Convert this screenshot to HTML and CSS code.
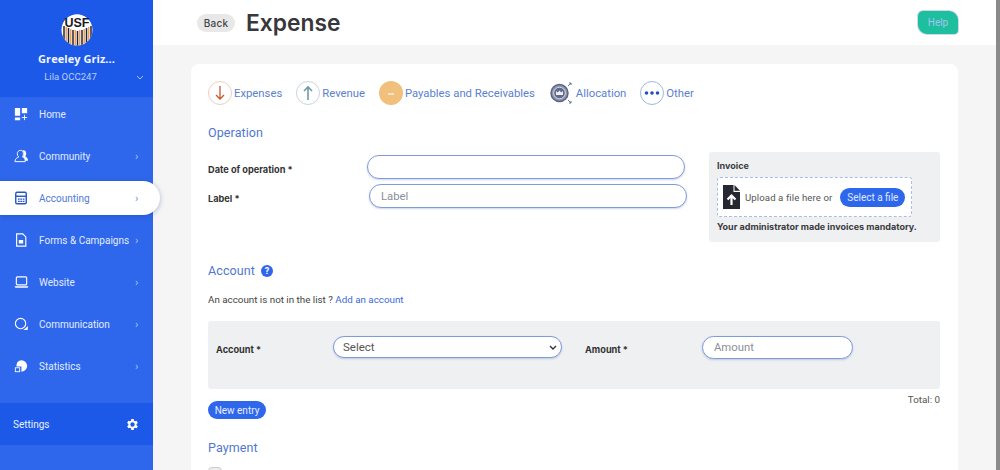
FILE: index.html
```html
<!DOCTYPE html>
<html lang="en">
<head>
<meta charset="utf-8">
<title>Expense</title>
<link rel="stylesheet" href="styles.css">
</head>
<body>
<div class="app">
  <aside class="sidebar">
    <div class="profile">
      <svg class="logo" width="34" height="36" viewBox="0 0 34 36">
        <defs><clipPath id="lc"><circle cx="17" cy="18" r="15.500"/></clipPath></defs>
        <circle cx="17" cy="18" r="15.500" fill="#fff"/>
        <g clip-path="url(#lc)">
          <path d="M4 14v22M8.500 16v20M13 18v18M17.500 19v17M22 18v18M26.500 16v20M31 14v22" stroke="#2b2230" stroke-width="1.500"/>
          <path d="M6.200 15v21M10.700 17v19M15.200 18v18M19.700 18v18M24.200 17v19M28.700 15v21" stroke="#e8a25a" stroke-width="1.500"/>
          <path d="M1 10l16 9 16-9V0H1z" fill="#fff"/>
        </g>
        <text x="17" y="15" text-anchor="middle" class="logo-text">USF</text>
      </svg>
      <div class="org">Greeley Griz...</div>
      <div class="user"><span class="user-name">Lila OCC247</span>
        <svg class="user-caret" width="8" height="5" viewBox="0 0 8 5"><path d="M1 1l3 3 3-3" fill="none" stroke="#a9c2f8" stroke-width="1"/></svg>
      </div>
    </div>
    <nav class="nav">
      <a class="nav-item">
        <svg class="nav-icon" viewBox="0 0 16 16"><path d="M1 1h6v9H1zM9 1h6v6H9zM1 12h6v3H1z" fill="#fff"/><path d="M9 12h6M12 9v6" stroke="#fff" stroke-width="1"/></svg>
        <span class="nav-label">Home</span>
      </a>
      <a class="nav-item">
        <svg class="nav-icon nav-icon-wide" viewBox="0 0 16 14"><path d="M1 13c0-3 2-4 4-5-1-1-1.500-2-1.500-3.500C3.500 2.500 5 1 7 1s3 1.500 3 3.500S9.500 7 9 8c2 1 3 2 3 5z" fill="none" stroke="#fff" stroke-width="1"/><path d="M9 1.200c2-.8 4 .5 4 3 0 1.500-.5 2.500-1 3.300 1.500.7 3 2 3 4.500h-3c0-2-1-3.500-2.500-4.200.5-1 1-2 1-3.300 0-1-.5-2-1.500-3.300z" fill="#fff"/></svg>
        <span class="nav-label">Community</span>
        <span class="chev">›</span>
      </a>
      <a class="nav-item active">
        <svg class="nav-icon" viewBox="0 0 16 16"><rect x="2" y="1.500" width="12" height="13" rx="1.500" fill="none" stroke="#2456c8" stroke-width="1.600"/><path d="M2 6h12" stroke="#2456c8" stroke-width="1.600"/><path d="M4.500 8.500h2v1.500h-2zM7.200 8.500h2v1.500h-2zM10 8.500h2v1.500h-2zM4.500 11h2v1.500h-2zM7.200 11h2v1.500h-2zM10 11h2v1.500h-2z" fill="#2456c8"/></svg>
        <span class="nav-label">Accounting</span>
        <span class="chev">›</span>
      </a>
      <a class="nav-item">
        <svg class="nav-icon" viewBox="0 0 16 16"><path d="M3 1h7l3.500 3.500V15H3z" fill="none" stroke="#fff" stroke-width="1.300"/><path d="M5.500 8h5v4h-5z" fill="#fff"/></svg>
        <span class="nav-label">Forms &amp; Campaigns</span>
        <span class="chev">›</span>
      </a>
      <a class="nav-item">
        <svg class="nav-icon nav-icon-wide" viewBox="0 0 16 14"><rect x="2.500" y="1.500" width="11" height="8.500" rx="1" fill="none" stroke="#fff" stroke-width="1.200"/><path d="M.5 11.500h15l-1 1.500h-13z" fill="#fff"/></svg>
        <span class="nav-label">Website</span>
        <span class="chev">›</span>
      </a>
      <a class="nav-item">
        <svg class="nav-icon nav-icon-wide" viewBox="0 0 16 14"><circle cx="7" cy="6.500" r="5.500" fill="none" stroke="#fff" stroke-width="1.200"/><path d="M15 9l-.500 4.500H10z" fill="#fff"/></svg>
        <span class="nav-label">Communication</span>
        <span class="chev">›</span>
      </a>
      <a class="nav-item">
        <svg class="nav-icon" viewBox="0 0 16 16"><path d="M6 2a6.500 6.500 0 1 1 2.500 12.500V8.500H3A6 6 0 0 1 6 2z" fill="#fff"/><rect x="1.500" y="10" width="5" height="4.500" fill="none" stroke="#fff"/></svg>
        <span class="nav-label">Statistics</span>
        <span class="chev">›</span>
      </a>
    </nav>
    <div class="settings">
      <span>Settings</span>
      <svg width="15" height="15" viewBox="0 0 24 24"><path fill="#fff" d="M19.400 13a7.500 7.500 0 0 0 0-2l2.100-1.600-2-3.500-2.500 1a7.500 7.500 0 0 0-1.700-1L15 3.200h-4l-.4 2.700a7.500 7.500 0 0 0-1.700 1l-2.500-1-2 3.500L6.500 11a7.500 7.500 0 0 0 0 2l-2.100 1.600 2 3.500 2.500-1a7.500 7.500 0 0 0 1.700 1l.4 2.700h4l.4-2.700a7.500 7.500 0 0 0 1.700-1l2.500 1 2-3.500zM13 15.500a3.500 3.500 0 1 1 0-7 3.500 3.500 0 0 1 0 7z" transform="translate(-1)"/></svg>
    </div>
  </aside>

  <main class="main">
    <header class="topbar">
      <div class="title-group">
        <button class="back">Back</button>
        <h1 class="title">Expense</h1>
      </div>
      <button class="help">Help</button>
    </header>

    <div class="content">
      <section class="card">
        <div class="tabs">
          <div class="tab">
            <span class="tab-icon ring-orange"><svg width="14" height="16" viewBox="0 0 14 16"><path d="M7 1v13M3 10l4 4 4-4" fill="none" stroke="#c8562a" stroke-width="1.300"/></svg></span>
            <span>Expenses</span>
          </div>
          <div class="tab">
            <span class="tab-icon ring-gray"><svg width="14" height="16" viewBox="0 0 14 16"><path d="M7 15V2M3 6l4-4 4 4" fill="none" stroke="#6f9aa8" stroke-width="1.600"/></svg></span>
            <span>Revenue</span>
          </div>
          <div class="tab">
            <span class="tab-icon solid-orange"><svg width="6" height="3" viewBox="0 0 6 3"><path d="M0 2h6" stroke="#fff" stroke-width="1.200"/></svg></span>
            <span>Payables and Receivables</span>
          </div>
          <div class="tab tab-allocation">
            <svg class="alloc" width="24" height="24" viewBox="0 0 24 24">
              <circle cx="10.500" cy="12" r="8.500" fill="#8e95a8" stroke="#5b6584" stroke-width="1.500"/>
              <circle cx="10.500" cy="12" r="5.800" fill="#5f6a8c" stroke="#d7dbe6"/>
              <path d="M7 14v-4l1.800 1.500 1.700-2 1.700 2L14 10v4z" fill="#eef0f6"/>
              <path d="M19 5l3-3M20 2h2v2M19 19l3 3M20 22h2v-2" fill="none" stroke="#6b7590" stroke-width="1"/>
            </svg>
            <span>Allocation</span>
          </div>
          <div class="tab">
            <span class="tab-icon ring-blue"><svg width="16" height="4" viewBox="0 0 16 4"><circle cx="2.500" cy="2" r="1.800" fill="#1f4fc4"/><circle cx="8" cy="2" r="1.800" fill="#1f4fc4"/><circle cx="13.500" cy="2" r="1.800" fill="#1f4fc4"/></svg></span>
            <span>Other</span>
          </div>
        </div>

        <h2 class="section-title">Operation</h2>
        <div class="operation">
          <div class="op-fields">
            <div class="op-row">
              <label class="label op-label">Date of operation *</label>
              <input class="field op-date" type="text">
            </div>
            <div class="op-row op-row-second">
              <label class="label op-label">Label *</label>
              <input class="field op-text" type="text" placeholder="Label">
            </div>
          </div>
          <div class="invoice">
            <div class="invoice-title">Invoice</div>
            <div class="dropzone">
              <svg width="18" height="24" viewBox="0 0 18 24"><path d="M1 0h10.500v7H18v17H1z" fill="#26282f"/><path d="M12.500 0L18 5.800h-5.500z" fill="#26282f"/><path d="M9.500 20v-9M5.500 14.500l4-4 4 4" fill="none" stroke="#fff" stroke-width="2.200"/></svg>
              <span class="drop-text">Upload a file here or</span>
              <button class="select-file">Select a file</button>
            </div>
            <div class="invoice-note">Your administrator made invoices mandatory.</div>
          </div>
        </div>

        <h2 class="section-title account-title">Account
          <svg class="q" width="12" height="12" viewBox="0 0 12 12"><circle cx="6" cy="6" r="6" fill="#2f67ec"/><text x="6" y="9.200" text-anchor="middle" class="q-text">?</text></svg>
        </h2>
        <p class="hint">An account is not in the list ? <a class="link">Add an account</a></p>

        <div class="entry">
          <label class="label entry-account">Account *</label>
          <div class="fake-select">
            <span>Select</span>
            <svg width="8" height="5" viewBox="0 0 8 5"><path d="M1 1l3 3 3-3" fill="none" stroke="#333" stroke-width="1.400"/></svg>
          </div>
          <label class="label entry-amount">Amount *</label>
          <input class="field amount" type="text" placeholder="Amount">
        </div>

        <div class="entry-foot">
          <button class="new-entry">New entry</button>
          <span class="total">Total: 0</span>
        </div>

        <h2 class="section-title payment">Payment</h2>
        <span class="check"></span>
      </section>
    </div>
  </main>
  <div class="scrollbar"></div>
</div>
</body>
</html>
```

FILE: styles.css
```css
* { box-sizing: border-box; }
html, body { margin: 0; height: 100%; overflow: hidden; }
body { font-family: Roboto, "Liberation Sans", sans-serif; color: #333; background: #f5f5f5; }
button { font-family: inherit; border: 0; padding: 0; }
h1, h2, p { margin: 0; }

.app { display: flex; width: 1000px; height: 470px; overflow: hidden; }

/* Sidebar */
.sidebar { width: 153px; flex: none; background: #2f67ec; display: flex; flex-direction: column; position: relative; z-index: 2; }
.profile { height: 97px; background: #1c59e8; display: flex; flex-direction: column; align-items: center; padding-top: 12px; position: relative; }
.logo { display: block; }
.logo-text { font: 700 12.500px "Liberation Sans", sans-serif; fill: #1d1a24; }
.org { font: 700 11px/14px "Open Sans", sans-serif; color: #f1f5ff; margin-top: 4px; letter-spacing: .05px; }
.user { font: 400 9.600px/14px Roboto, sans-serif; color: #b8cdfa; margin-top: 4px; }
.user-name { display: block; margin-right: 12px; }
.user-caret { position: absolute; right: 9px; top: 75px; }

.nav { display: flex; flex-direction: column; gap: 8px; }
.nav-item { height: 34px; display: flex; align-items: center; padding-left: 14px; color: #e2ebff; font-size: 10px; }
.nav-item.active { background: #fff; color: #4f78d8; margin-right: -7px; border-radius: 0 17px 17px 0; box-shadow: 0 1px 5px rgba(30, 60, 130, .35); }
.nav-icon { width: 14px; height: 14px; flex: none; margin-right: 11px; }
.nav-icon-wide { width: 15px; margin-right: 10px; }
.nav-label { flex: 1; white-space: nowrap; }
.chev { width: 18px; flex: none; font-size: 11px; color: #a8c2f8; }
.active .chev { color: #7090da; width: 25px; }

.settings { margin-top: 20px; height: 42px; background: #1c59e8; display: flex; align-items: center; justify-content: space-between; padding: 0 13px 0 13px; color: #e8efff; font-size: 10px; }

/* Main */
.main { flex: 1; min-width: 0; display: flex; flex-direction: column; }
.topbar { height: 45px; flex: none; background: #fff; display: flex; align-items: center; justify-content: space-between; padding: 0 42px 0 44px; }
.title-group { display: flex; align-items: center; gap: 11px; }
.back { width: 38px; height: 18px; border-radius: 9px; background: #e8e8e8; color: #444; font: 500 10px Inter, sans-serif; letter-spacing: .2px; }
.title { font: 600 22.800px/30px Inter, sans-serif; color: #37373c; }
.help { width: 40px; height: 23px; background: #1dbf9f; color: #a7c3ef; font-size: 10px; border-radius: 5px 9px 4px 9px; box-shadow: 0 0 0 1px rgba(100, 120, 220, .3); }

.content { flex: 1; min-height: 0; padding: 19px 42px 0 38px; }
.card { background: #fff; border-radius: 8px 8px 0 0; padding: 17px 18px 0 17px; height: 500px; }

.tabs { display: flex; align-items: center; height: 24px; gap: 14px; font-size: 11.300px; color: #5a7fcf; }
.tab { display: flex; align-items: center; gap: 2px; }
.tab-allocation { gap: 3px; }
.tab-icon { width: 24px; height: 24px; border-radius: 50%; display: flex; align-items: center; justify-content: center; flex: none; }
.ring-orange { border: 1px solid #edcfbd; }
.ring-gray { border: 1px solid #c8d5dc; }
.solid-orange { background: #f0c07c; }
.ring-blue { border: 1px solid #9fb7e6; }

.section-title { font: 400 12.500px/16px Roboto, sans-serif; color: #4f78d0; letter-spacing: .1px; }
.tabs + .section-title { margin-top: 20px; }

.label { font: 700 9.200px/12px Inter, "Liberation Sans", sans-serif; color: #333; }

.operation { display: flex; align-items: flex-start; margin-top: 14px; }
.op-fields { width: 501px; flex: none; }
.op-row { display: flex; align-items: center; height: 24px; }
.op-row-second { margin-top: 5px; }
.op-label { width: 159px; flex: none; padding-top: 6px; line-height: 12px; }
.op-row-second .op-label { width: 161px; }
.field { height: 24px; border: 1px solid #7f9bd8; border-radius: 12px; background: #fff; padding: 0 11px; font: 400 11.300px Roboto, sans-serif; outline: none; box-shadow: 0 1px 2px rgba(60, 90, 170, .25); }
.field::placeholder { color: #8a8f99; opacity: 1; }
.op-date { width: 318px; }
.op-text { width: 318px; }

.invoice { width: 231px; height: 90px; margin-top: -3px; background: #eef0f2; border-radius: 3px; padding: 8px 8px 0; }
.invoice-title { font: 700 9px/11px Inter, sans-serif; color: #3a3a3f; }
.dropzone { width: 195px; height: 40px; margin-top: 6px; border: 1px dashed #a9bbe6; border-radius: 3px; background: #fff; display: flex; align-items: center; padding-left: 4px; }
.drop-text { font: 400 9.600px Roboto, "Open Sans", sans-serif; color: #555; margin-left: 5px; white-space: nowrap; letter-spacing: .1px; }
.select-file { width: 65px; height: 19px; border-radius: 10px; background: #2f67ec; color: #dfe8ff; font-size: 10px; margin-left: 8px; flex: none; }
.invoice-note { font: 700 9px/12px Inter, sans-serif; color: #3a3a3f; margin-top: 4px; white-space: nowrap; }

.account-title { display: flex; align-items: center; gap: 6px; margin-top: 21px; }
.q-text { font: 700 9px Roboto, sans-serif; fill: #fff; }
.hint { font-size: 9.800px; line-height: 12px; color: #444; margin-top: 15px; }
.link { color: #3d6ad6; }

.entry { display: flex; align-items: flex-start; height: 68px; margin-top: 15px; background: #eef0f2; border-radius: 3px; padding: 15px 0 0 8px; }
.entry-account { width: 117px; flex: none; margin-top: 8px; }
.fake-select { width: 229px; height: 22px; flex: none; border: 1px solid #7f9bd8; border-radius: 11px; background: #fff; display: flex; align-items: center; justify-content: space-between; padding: 0 4px 0 9px; font-size: 11.500px; color: #555; box-shadow: 0 1px 2px rgba(60, 90, 170, .25); }
.entry-amount { width: 117px; flex: none; margin: 8px 0 0 23px; }
.amount { width: 151px; height: 23px; }

.entry-foot { display: flex; align-items: flex-start; justify-content: space-between; margin-top: 5px; height: 24px; }
.new-entry { width: 58px; height: 18px; margin-top: 7px; border-radius: 9px; background: #2f67ec; color: #e6edff; font-size: 10px; }
.total { font-size: 9.800px; line-height: 12px; color: #555; }

.payment { margin-top: 22px; }
.check { display: block; width: 14px; height: 14px; margin-top: 11px; border: 1px solid #ccc; border-radius: 4px; background: #eee; }

.scrollbar { position: fixed; top: 0; right: 0; width: 4px; height: 470px; background: #8a8a8a; }
```
